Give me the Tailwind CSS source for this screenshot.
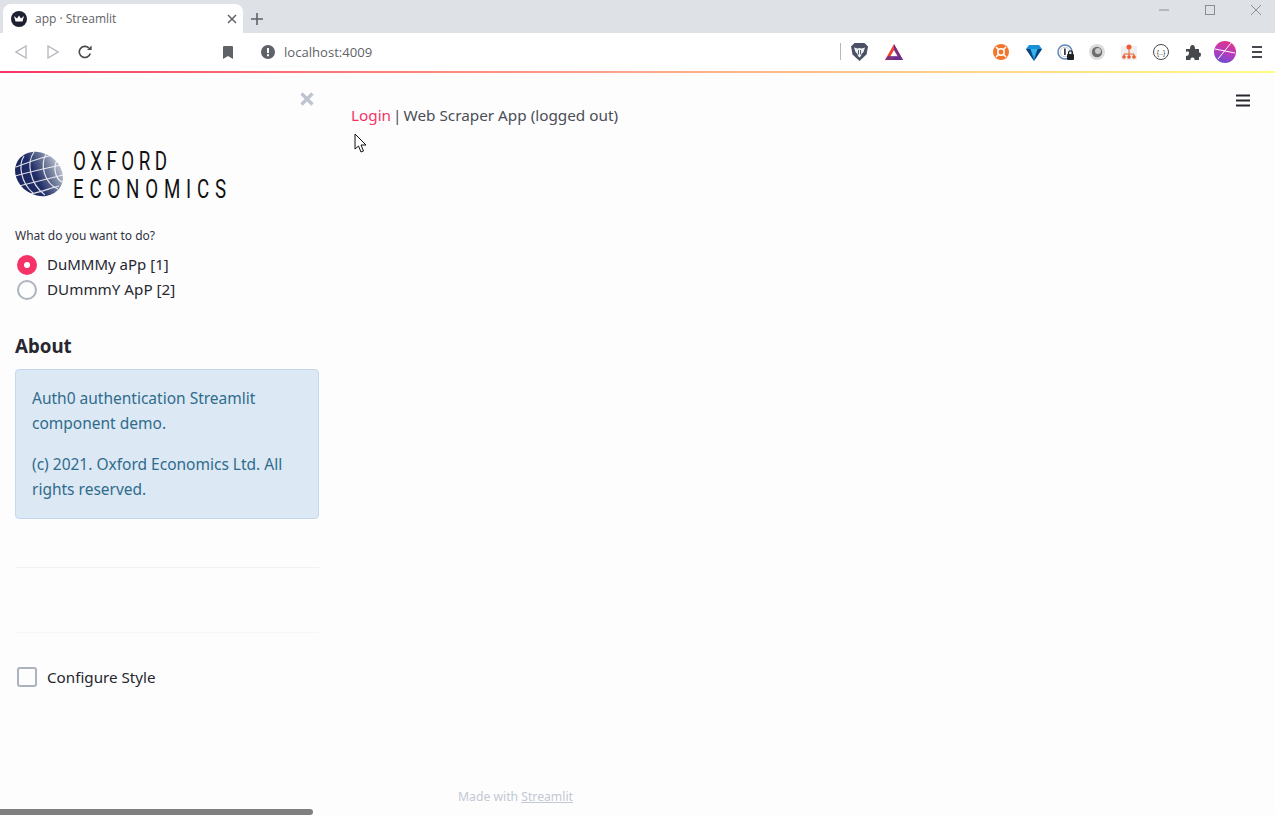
<!DOCTYPE html>
<html lang="en">
<head>
  <meta charset="UTF-8" />
  <title>app · Streamlit</title>
  <script src="https://cdn.jsdelivr.net/npm/@tailwindcss/browser@4"></script>
</head>
<body class="w-[1275px] h-[815px] overflow-hidden bg-[#fdfdfd] font-['Noto_Sans',sans-serif] relative flex flex-col">

  <!-- tab strip -->
  <div class="h-[33px] bg-[#dee1e6] flex items-end shrink-0">
    <div class="ml-[3px] w-[240px] h-[29px] bg-white rounded-t-lg flex items-center pl-[8px] pr-[6px]">
      <svg class="w-4 h-4 shrink-0" viewBox="0 0 16 16"><circle cx="8" cy="8" r="8" fill="#1d2030"/><path d="M3 5 6 7.500 8 4.500 10 7.500 13 5 11.500 10.500H4.500Z" fill="#fff"/></svg>
      <span class="ml-[8px] text-[12px] text-[#5f6368] font-['Open_Sans',sans-serif]">app · Streamlit</span>
      <svg class="ml-auto w-[10px] h-[10px]" viewBox="0 0 10 10"><path d="M1 1 9 9M9 1 1 9" stroke="#5f6368" stroke-width="1.5"/></svg>
    </div>
    <svg class="ml-[8px] mb-[8px] w-3 h-3" viewBox="0 0 12 12"><path d="M6 0V12M0 6H12" stroke="#5f6368" stroke-width="1.6"/></svg>
    <div class="ml-auto flex items-center self-start mt-[5px] mr-[14px] gap-[36px]">
      <svg class="w-[10px] h-[10px]" viewBox="0 0 10 10"><path d="M0 5H10" stroke="#8a8d91"/></svg>
      <svg class="w-[10px] h-[10px]" viewBox="0 0 10 10"><rect x=".5" y=".5" width="9" height="9" fill="none" stroke="#8a8d91"/></svg>
      <svg class="w-[10px] h-[10px]" viewBox="0 0 10 10"><path d="M0 0 10 10M10 0 0 10" stroke="#8a8d91"/></svg>
    </div>
  </div>

  <!-- toolbar -->
  <div class="h-[38px] bg-white flex items-center shrink-0 relative">
    <svg class="ml-[15px] w-3 h-[14px]" viewBox="0 0 12 14"><path d="M11 1V13L1 7Z" fill="none" stroke="#b4b7bb" stroke-width="1.3"/></svg>
    <svg class="ml-[20px] w-3 h-[14px]" viewBox="0 0 12 14"><path d="M1 1V13L11 7Z" fill="none" stroke="#b4b7bb" stroke-width="1.3"/></svg>
    <svg class="ml-[19px] w-[14px] h-[14px]" viewBox="0 0 14 14"><path d="M12.300 8.500A5.600 5.600 0 1 1 10.800 2.900" fill="none" stroke="#45484c" stroke-width="1.6"/><path d="M9 5H13.600V.6Z" fill="#45484c"/></svg>
    <svg class="ml-[131px] w-[10px] h-[13px]" viewBox="0 0 10 13"><path d="M0 1Q0 0 1 0H9Q10 0 10 1V13L5 10 0 13Z" fill="#5f6368"/></svg>
    <svg class="ml-[28px] w-[14px] h-[14px]" viewBox="0 0 14 14"><circle cx="7" cy="7" r="7" fill="#5f6368"/><rect x="6" y="3" width="2" height="5" fill="#fff"/><rect x="6" y="9.200" width="2" height="2" fill="#fff"/></svg>
    <span class="ml-[9px] mt-[1px] text-[13.100px] text-[#5f6368] font-['Open_Sans',sans-serif]">localhost:4009</span>

    <div class="absolute left-[840px] top-[10px] w-px h-[17px] bg-[#b5b8bc]"></div>

    <!-- brave lion -->
    <svg class="absolute left-[851px] top-[10px] w-[17px] h-[18px]" viewBox="0 0 17 18"><path d="M3.500 0H13.500L17 3.500 15.500 11.500 8.500 18 1.500 11.500 0 3.500Z" fill="#4a5163"/><path d="M3 4.500 6.500 5.500 8.500 5 10.500 5.500 14 4.500 12.500 9 10.500 11 10 13 8.500 14.500 7 13 6.500 11 4.500 9Z" fill="#eef0f3"/><path d="M7.500 7V11.500M9.500 7V11.500" stroke="#4a5163" stroke-width=".9"/></svg>
    <svg class="absolute left-[885px] top-[11px] w-[18px] h-[16px]" viewBox="0 0 18 16"><path d="M9 0 18 16H0Z" fill="#e8452c"/><path d="M9 0 18 16H9Z" fill="#7b2a8c"/><path d="M9 6 13 13H5Z" fill="#fff"/><path d="M0 16 3 12H15L18 16Z" fill="#662d91" opacity=".8"/></svg>

    <svg class="absolute left-[993px] top-[11px] w-4 h-4" viewBox="0 0 16 16"><circle cx="8" cy="8" r="8" fill="#f4762d"/><circle cx="8" cy="8" r="3.200" fill="none" stroke="#fff" stroke-width="1.500"/><path d="M3 3 6 6M13 3 10 6M3 13 6 10M13 13 10 10" stroke="#fff" stroke-width="1.500"/></svg>
    <svg class="absolute left-[1026px] top-[11px] w-4 h-[17px]" viewBox="0 0 16 17"><path d="M3 1H13L16 5 8 17 0 5Z" fill="#1790d8"/><path d="M0 5H4.500L8 17ZM16 5H11.500L8 17Z" fill="#0d3f78"/><path d="M4.500 5H11.500L8 13Z" fill="#2fb7ee"/></svg>
    <svg class="absolute left-[1057px] top-[11px] w-[17px] h-[17px]" viewBox="0 0 17 17"><circle cx="8" cy="8" r="7" fill="#fff" stroke="#5e87b8" stroke-width="1.500"/><circle cx="8" cy="8" r="4.800" fill="none" stroke="#c8ccd2"/><rect x="7" y="4.500" width="1.800" height="6.500" fill="#3b4048"/><rect x="10" y="10" width="7" height="6" rx="1" fill="#202124"/><path d="M11.500 10V8.800A2 2 0 0 1 15.500 8.800V10" fill="none" stroke="#202124" stroke-width="1.200"/></svg>
    <svg class="absolute left-[1089px] top-[11px] w-4 h-4" viewBox="0 0 16 16"><circle cx="8" cy="8" r="8" fill="#dcdcdc"/><circle cx="8" cy="8" r="5.200" fill="#6d6d6d"/><circle cx="9" cy="7" r="3" fill="#c9c9c9"/></svg>
    <svg class="absolute left-[1121px] top-[11px] w-4 h-4" viewBox="0 0 16 16"><rect y="2" width="16" height="14" fill="#efefef"/><circle cx="8" cy="3" r="2.500" fill="#ee5a2c"/><path d="M8 5V10M3 13V10H13V13M8 10V13" fill="none" stroke="#ee5a2c"/><circle cx="3" cy="13" r="1.800" fill="#ee5a2c"/><circle cx="8" cy="13" r="1.800" fill="#ee5a2c"/><circle cx="13" cy="13" r="1.800" fill="#ee5a2c"/></svg>
    <div class="absolute left-[1153px] top-[11px] w-4 h-4 rounded-full border border-[#45484c] flex items-center justify-center text-[7px] leading-none text-[#45484c] font-['Liberation_Sans',sans-serif]">{..}</div>
    <svg class="absolute left-[1186px] top-[12px] w-[15px] h-[15px]" viewBox="0 0 15 15"><path d="M0 4H4Q4 0 6.500 0T9 4H13V7.500Q15 7 15 9.500T13 12V15H8.500Q9 12.500 6.500 12.500T4.500 15H0V11Q3 11 3 8T0 7Z" fill="#45484c"/></svg>
    <svg class="absolute left-[1214px] top-[8px] w-[22px] h-[22px]" viewBox="0 0 22 22"><defs><linearGradient id="av" x1=".6" y1="0" x2=".3" y2="1"><stop offset="0" stop-color="#e0338a"/><stop offset=".55" stop-color="#b13dc0"/><stop offset="1" stop-color="#6a4cd0"/></linearGradient></defs><circle cx="11" cy="11" r="11" fill="url(#av)"/><path d="M1 8 21 12M4 18 17 2" stroke="#fff" stroke-width="1"/></svg>
    <svg class="absolute left-[1252px] top-[13px] w-[10px] h-3" viewBox="0 0 10 12"><path d="M0 1H10M0 6H10M0 11H10" stroke="#45484c" stroke-width="2"/></svg>
  </div>

  <!-- loading bar -->
  <div class="h-[2px] shrink-0 bg-gradient-to-r from-[#f63366] via-[#fca68a] to-[#fffd80]"></div>

  <div class="flex flex-1 min-h-0">
    <!-- sidebar -->
    <aside class="w-[336px] shrink-0 pl-[15px] pr-[17px] flex flex-col relative">
      <svg class="absolute left-[300px] top-[19px] w-[14px] h-[14px]" viewBox="0 0 14 14"><path d="M1.500 1.500 12.500 12.500M12.500 1.500 1.500 12.500" stroke="#bdc3cf" stroke-width="3.200"/></svg>

      <!-- logo -->
      <div class="mt-[75px] h-[52px] flex items-center">
        <svg class="w-12 h-12 shrink-0" viewBox="0 0 48 48">
          <defs>
            <linearGradient id="globe" x1=".85" y1="0" x2=".25" y2=".8"><stop offset="0" stop-color="#d9dde8"/><stop offset=".35" stop-color="#76829f"/><stop offset=".7" stop-color="#202d66"/><stop offset="1" stop-color="#1b2760"/></linearGradient>
          </defs>
          <ellipse cx="24" cy="24" rx="25" ry="21" fill="url(#globe)" transform="rotate(32 24 24)"/>
          <g fill="none" stroke="#fff" stroke-width="1.200" opacity=".85">
            <path d="M9 6C3 15 6 33 18 43"/><path d="M19 2C11 13 15 34 30 45"/><path d="M31 4C25 15 29 33 43 39"/>
            <path d="M42 10C38 18 40 28 47 32"/>
            <path d="M1 17C14 12 28 7 38 5"/><path d="M0 26C14 22 32 18 46 15"/><path d="M4 36C20 32 36 28 48 25"/><path d="M16 44C26 42 36 38 44 36"/>
          </g>
        </svg>
        <div class="ml-[10px] mt-[3px] flex flex-col origin-left scale-x-[.75] font-['Roboto',sans-serif] text-[25px] leading-[28px] text-[#111] font-normal whitespace-nowrap">
          <span class="tracking-[6px]">OXFORD</span>
          <span class="tracking-[7.700px]">ECONOMICS</span>
        </div>
      </div>

      <div class="mt-[28px] text-[12px] leading-[16px] text-[#31333f]">What do you want to do?</div>
      <div class="mt-[8px] flex flex-col text-[15.200px] text-[#262730]">
        <div class="h-[25px] flex items-center">
          <span class="ml-[2px] w-5 h-5 rounded-full bg-[#f63366] flex items-center justify-center"><span class="w-[6px] h-[6px] rounded-full bg-white"></span></span>
          <span class="ml-[10px] text-[15px]">DuMMMy aPp [1]</span>
        </div>
        <div class="h-[25px] flex items-center">
          <span class="ml-[2px] w-5 h-5 rounded-full border-2 border-[#adb2bf]"></span>
          <span class="ml-[10px]">DUmmmY ApP [2]</span>
        </div>
      </div>

      <h2 class="mt-[30px] text-[18.700px] leading-[28px] font-bold text-[#262730]">About</h2>

      <div class="mt-[9px] h-[150px] rounded-[4px] bg-[#dce8f4] border border-[#c3d8ee] px-[16px] pt-[16px] text-[15.500px] leading-[25px] text-[#2f6c8c]">
        <p>Auth0 authentication Streamlit component demo.</p>
        <p class="mt-[16px]">(c) 2021. Oxford Economics Ltd. All rights reserved.</p>
      </div>

      <div class="mt-[48px] h-px bg-[#eef3f3]"></div>
      <div class="mt-[64px] h-px bg-[#f4f7f7]"></div>

      <div class="mt-[33px] h-[22px] flex items-center text-[15.200px] text-[#262730]">
        <span class="ml-[2px] w-[20px] h-[20px] rounded-[3px] border-2 border-[#adb2bf]"></span>
        <span class="ml-[10px]">Configure Style</span>
      </div>
    </aside>

    <!-- main -->
    <main class="flex-1 relative pl-[15px] pt-[31px]">
      <div class="text-[15.300px] leading-[22px] text-[#4b4d57]"><span class="text-[#f63366]">Login</span> <span class="-mx-[2px]">|</span> Web Scraper App (logged out)</div>
      <svg class="absolute left-[18px] top-[60px] w-[13px] h-[20px]" viewBox="0 0 13 20"><path d="M1 1V16L4.500 13 7 19 9.500 18 7 12H12Z" fill="#fff" stroke="#111" stroke-width="1"/></svg>
      <svg class="absolute right-[24px] top-[21px] w-[16px] h-[13px]" viewBox="0 0 16 13"><path d="M1 1.500H15M1 6.500H15M1 11.500H15" stroke="#262730" stroke-width="2"/></svg>
      <div class="absolute left-[122px] top-[716px] text-[12.200px] leading-[16px] text-[#c3c8d4]">Made with <span class="underline">Streamlit</span></div>
    </main>
  </div>

  <!-- horizontal scrollbar -->
  <div class="absolute left-0 bottom-0 w-[313px] h-[6px] rounded-r-full bg-[#7f7f7f]"></div>
</body>
</html>
